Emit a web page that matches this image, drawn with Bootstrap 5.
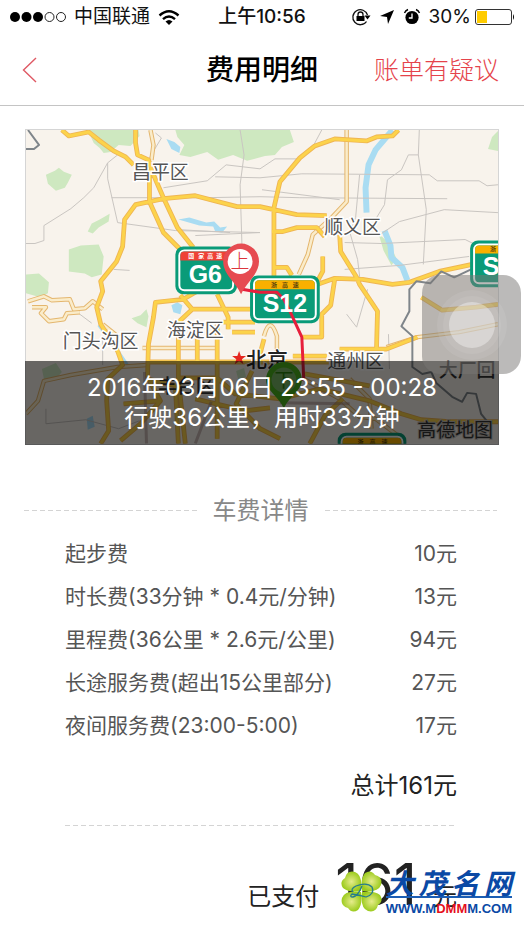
<!DOCTYPE html>
<html lang="zh-CN">
<head>
<meta charset="utf-8">
<meta name="viewport" content="width=device-width, initial-scale=1">
<title>费用明细</title>
<link rel="stylesheet" href="https://cdn.jsdelivr.net/npm/bootstrap@5.3.0/dist/css/bootstrap.min.css">
<style>
body{font-family:Inter,"Noto Sans CJK SC",sans-serif;background:#fff;color:#222}
.status{height:34px;font-size:19px;line-height:34px;color:#111;padding:0 9px}
.clock{font-weight:500}
.status svg,.topbar svg,.site-mark svg{display:block}
.topbar{height:72px;border-bottom:1px solid #c4c4c4;padding:0 25px}
.side{flex:1 1 0}
.topbar h1{font-size:28px;line-height:40px;font-weight:500;color:#000}
.dispute{font-size:25px;line-height:40px;font-weight:300;color:#e5434b;text-decoration:none}
.trip{padding:23px 25px 0}
.map-box{border:1px solid #d5d5d5;overflow:hidden}
.map-box svg{display:block;width:100%;height:auto}
.trip-info{left:0;right:0;bottom:0;height:84px;background:rgba(0,0,0,.58);color:#fff;font-size:24px;line-height:30px;padding-top:12px}
.assist{width:99px;height:99px;right:-22px;top:146px;border:0;border-radius:18px;background:rgba(120,118,115,.5)}
.assist span{border-radius:50%;background:rgba(255,255,255,.08)}
.ring-a{width:70px;height:70px}.ring-b{width:58px;height:58px}.ring-c{width:46px;height:46px}
.assist .ring-c{background:rgba(255,255,255,.36)}
.fare-head{padding:47px 27px 0 24px;gap:16px}
.fare-head h2{font-size:24px;line-height:38px;font-weight:400;color:#888}
.dash{height:1px;background:repeating-linear-gradient(90deg,#d4d4d4 0 5px,transparent 5px 8px)}
.fare{padding:2px 67px 0 65px}
.fare table{font-size:21px;line-height:43px;color:#555}
.fare td,.fare th{padding:0;font-weight:400}
.total{font-size:24px;line-height:40px;padding-top:19px;margin-bottom:19px}
.paid{font-size:24px;line-height:60px;padding-top:29px;gap:16px}
.paid strong{font-size:57px;font-weight:400}
.site-mark{right:12px;bottom:11px;gap:4px;color:#0a49a5;text-decoration:none}
.site-name{font-family:"Noto Sans CJK SC",sans-serif;font-size:28px;line-height:28px;font-weight:700;font-style:italic;border-bottom:2px solid #1c5eb4}
.site-url{font-family:"Liberation Sans",Arial,sans-serif;font-size:13px;line-height:14px;font-weight:700}
.site-url b{color:#e5101c}
</style>
<script src="https://cdn.jsdelivr.net/npm/bootstrap@5.3.0/dist/js/bootstrap.bundle.min.js"></script>
</head>
<body>
<div class="position-relative">
<div class="status d-flex align-items-center">
  <div class="side d-flex align-items-center gap-2">
    <svg width="57" height="12" viewBox="0 0 57 12"><g fill="#000"><circle cx="6" cy="6" r="5"/><circle cx="17.500" cy="6" r="5"/><circle cx="29" cy="6" r="5"/></g><g fill="none" stroke="#222"><circle cx="40.500" cy="6" r="4.500"/><circle cx="52" cy="6" r="4.500"/></g></svg>
    <span>中国联通</span>
    <svg width="22" height="17" viewBox="0 0 22 17" fill="none" stroke="#000" stroke-width="2.400"><path d="M1.500 6.500Q11-2 20.500 6.500M5 10.200Q11 4.800 17 10.200"/><path d="M7.500 12.500Q11 9.500 14.500 12.500L11 16Z" fill="#000" stroke="none"/></svg>
  </div>
  <span class="clock">上午10:56</span>
  <div class="side d-flex align-items-center justify-content-end">
    <svg width="20" height="18" viewBox="0 0 20 18" class="me-2"><path d="M15.500 13.500A7.500 7.500 0 1 1 16.500 7" fill="none" stroke="#111" stroke-width="1.300"/><path d="M13.500 7.500h6l-3 4z"/><path d="M5.500 8h8v5h-8z"/><path d="M7 8V6.500a2.500 2.500 0 0 1 5 0V8" fill="none" stroke="#111" stroke-width="1.300"/></svg>
    <svg width="16" height="16" viewBox="0 0 16 16" class="me-2"><path d="M15 1 9 15 8 8 1 7Z"/></svg>
    <svg width="18" height="18" viewBox="0 0 18 18" class="me-2"><circle cx="9" cy="9.500" r="6.600"/><path d="M1.500 5Q2.500 2.500 5 1.500M16.500 5Q15.500 2.500 13 1.500" fill="none" stroke="#000" stroke-width="1.400"/><path d="M9 5.500v4.500H5.800" fill="none" stroke="#fff" stroke-width="1.300"/></svg>
    <span class="me-1">30%</span>
    <svg width="40" height="16" viewBox="0 0 40 16"><rect x=".5" y=".5" width="36" height="15" rx="2.500" fill="#fff" stroke="#333"/><path d="M2 2h10v12H2z" fill="#fc0"/><path d="M38 5q2 3 0 6z"/></svg>
  </div>
</div>

<header class="topbar d-flex align-items-center">
  <div class="side"><button class="btn p-0 border-0" aria-label="返回"><svg width="18" height="26" viewBox="5 0 18 26" overflow="visible"><path d="M16 1 3.500 13 16 25" fill="none" stroke="#df5964" stroke-width="1.400"/></svg></button></div>
  <h1 class="m-0">费用明细</h1>
  <div class="side text-end"><a class="dispute text-nowrap" href="#">账单有疑议</a></div>
</header>

<section class="trip">
<div class="position-relative">
<div class="map-box">
<svg viewBox="25 130 474 315" role="img" aria-label="行程地图">
<defs><clipPath id="frame"><path d="M25 130h474v315H25z"/></clipPath>
<path id="lanes" d="M150 130 153 145 151 160M347 130V202L332 218 313 235 308 255 299 275M27 302 43 297 51 301 69 300 73 310 84 309 92 302 102 310M31 308 45 308 40 314 48 322 63 320 66 314 79 313M102 325 118 338M142 349H218M387 348 418 338 460 333 499 325M25 415 37 402 43 382 70 376 117 368 147 366M304 380 340 400 360 418 376 420 400 438M350 380 370 400 372 430M264 337Q270 315 277 337V355"/>
<path id="roads" d="M61 130 68 136 88 132 98 140 113 151 125 157 133 165M135 130 135 143 137 155 148 160 153 175 163 198 177 228 193 248M149 170 149 202 163 233 182 252M100 445 108 432 106 402 107 380 122 366 117 352 100 325 96 308 102 292 100 282 116 262 122 247 124 220 135 205 163 199 195 196 237 207 260 207 297 215 327 216M399 130 393 136 377 137 367 141 335 139 315 146 300 158 280 182 274 208V280M272 232H283L297 228H317L325 237M340 235 341 252 357 278 360 285 378 312 377 350M274 268H287L292 276M323 257V272L317 283M318 285 335 279 363 280 393 285 410 283 440 272 473 265M335 280 331 306 322 315V338H302M422 298 443 311 477 308 499 305M293 357H327M340 350H387L418 338M200 290 183 300 155 303 153 318 148 345 147 378 160 402 140 425 120 442M180 296 192 310 178 323V380L185 445M192 310H251M217 295 228 318V330M223 323H255M232 333H255M217 324V440M197 338V363M147 363H340M178 379H217L235 395 280 400 320 390 370 402 402 415 422 421 450 423 499 423M147 380 175 387 178 445M305 375 370 387M252 372 236 405 260 430 280 440M310 445 325 417 343 400M123 405 160 402M264 340 260 355M195 400 245 412 270 409"/></defs>
<g clip-path="url(#frame)">
<path fill="#f8f3ec" d="M25 130h474v315H25z"/>
<path fill="#cee8c0" d="M87 130 93 143 99 148 103 153 110 152 118 145 130 146 139 136 138 130ZM45 175 54 171 58 168 63 172 71 175 67 183 64 188 55 191 47 184ZM87 232 91 224 99 220 109 214 108 222 98 228 92 234ZM68 250 80 246 98 245 103 257 101 275 91 278 84 274 68 272ZM25 275 38 274 48 283 47 294 39 298 25 294ZM175 130 177 137 184 145 179 155 190 157 207 152 218 160 233 155 247 161 265 156 275 155 282 147 294 142 290 130ZM489 149 493 137 499 131V151ZM131 319 140 316 146 310 148 317 146 328 137 324ZM41 370 55 364 61 373 55 380 43 380ZM236 372 244 369 246 378 238 380ZM379 234 390 244 397 259 392 266 384 251Z"/>
<g fill="none" stroke="#a9dcf2" stroke-linejoin="round">
<path stroke-width="6" d="M393 130 376 150 369 165 366 188 367 213M385 231 391 246 392 258 403 268 408 281"/>
<path stroke-width="3" d="M98 326 116 350 127 366"/>
</g>
<path fill="#a9dcf2" d="M166 139 174 142 180 147 179 153 171 149ZM178 220 189 218 206 223 214 222 220 228 227 227 222 233 215 232 213 227 199 226ZM171 306 177 303 182 306 180 315 173 313ZM86 420 92 417 94 428 87 431Z"/>
<path fill="none" stroke="#c9c5c1" d="M25 244 34 244 43 241 43 226 70 209 83 198 93 188 107 163 117 155M107 163 107 179 117 223 175 231 260 233M111 198 204 198 260 197 300 198 448 199M163 188 207 181 226 165 260 169 275 159 300 159M215 177 260 178 302 174 430 175 438 181 480 181 488 186 499 185M240 130 244 155 240 185 242 250M420 130 419 155 427 210 424 265M419 155 409 155 402 170 388 180 385 205 374 223M195 236 260 233M177 230 230 233M382 234 400 222 445 210 499 213M345 243 382 244 466 240 476 245M345 270 400 266 470 257M262 190 340 200M360 175 356 218 350 232 358 260 361 285M347 315 357 328 368 290M113 270 129 271M75 312 91 324M155 133 161 138 149 158M322 130 314 145M102 338V366M45 410 45 425 85 421 118 430 139 422M389 335 390 370"/>
<g fill="none" stroke-linejoin="round">
<use href="#lanes" stroke="#e4b66e" stroke-width="4.500"/>
<use href="#lanes" stroke="#faecca" stroke-width="2.500"/>
<use href="#roads" stroke="#efb553" stroke-width="4.800"/>
<use href="#roads" stroke="#fcd34b" stroke-width="3"/>
<path stroke="#9d8080" stroke-width="3" opacity=".5" d="M144 373 146 445M195 445 211 403M280 404 350 405"/>
<path stroke="#7f858a" stroke-width="2" d="M27 130 38 145 33 149H25M472 270 455 278 442 272 431 284 417 282 410 290 410 312 402 327 413 337 413 368 423 375 432 373 437 384 453 398 463 403 468 394 477 395 482 415 490 425"/>
</g>
<g font-family="Inter,'Noto Sans CJK SC',sans-serif" text-anchor="middle">
<g font-size="19" fill="#555" stroke="#fff" stroke-width="3" paint-order="stroke">
<text x="160" y="179">昌平区</text><text x="353" y="234">顺义区</text><text x="195" y="338">海淀区</text><text x="100" y="349">门头沟区</text><text x="356" y="369">通州区</text></g>
<g font-size="19" font-weight="500" fill="#333"><text x="186" y="394">丰台区</text><text x="468" y="378">大厂回</text></g>
<text x="267" y="368" font-size="21" font-weight="500" fill="#222" stroke="#fff" stroke-width="2" paint-order="stroke">北京</text>
<path fill="#e5261f" d="m239 352 1.800 5h5.200l-4.200 3.200 1.600 5-4.400-3-4.400 3 1.600-5-4.200-3.200h5.200z"/>
<g stroke="#fff" stroke-width="2"><rect x="176" y="248" width="60" height="46" rx="7" fill="#0a9b78" stroke="#0a9b78"/><rect x="179" y="251" width="54" height="40" rx="5" fill="#0a9b78"/><rect x="251" y="277" width="68" height="46" rx="7" fill="#0a9b78" stroke="#0a9b78"/><rect x="254" y="280" width="62" height="40" rx="5" fill="#0a9b78"/><rect x="472" y="242" width="60" height="45" rx="7" fill="#0a9b78" stroke="#0a9b78"/><rect x="475" y="245" width="62" height="39" rx="5" fill="#0a9b78"/><rect x="339" y="435" width="67" height="46" rx="7" fill="#0a9b78" stroke="#0a9b78"/><rect x="342" y="438" width="61" height="40" rx="5" fill="#0a9b78"/></g>
<path fill="#ef4136" d="M180 261v-5q0-4 4-4h44q4 0 4 4v5z"/><path fill="#f9b000" d="M255 290v-5q0-4 4-4h52q4 0 4 4v5zM476 254v-4q0-4 4-4h30v8zM343 448v-5q0-4 4-4h51q4 0 4 4v5z"/>
<g font-size="6" font-weight="700"><g fill="#fff"><text x="191" y="259">国</text><text x="201" y="259">家</text><text x="210" y="259">高</text><text x="219" y="259">速</text></g><g fill="#59440b"><text x="274" y="288">浙</text><text x="285" y="288">高</text><text x="296" y="288">速</text><text x="494" y="252">浙</text><text x="361" y="445">浙</text><text x="373" y="445">高</text><text x="385" y="445">速</text></g></g>
<path fill="none" stroke="#e71f3c" stroke-width="3" stroke-linejoin="round" d="M242 290 260 293 277 293 284 300 290 312 302 338 304 382"/>
<g fill="#fff" font-size="25" font-weight="700" font-family="'Liberation Sans',Arial,sans-serif"><text x="205" y="284">G6</text><text x="285" y="313">S12</text><text x="492" y="276">S</text></g>
<path fill="#e64b51" d="M241 295C236 283 223 275 223 262a18 18 0 0 1 36 0C259 275 246 283 241 295Z"/><circle cx="240" cy="262" r="12.500" fill="#fff"/><text x="240" y="269" font-size="19" font-weight="300" fill="#dc353d">上</text>
<path fill="#4ab51d" d="M284 410C279 397 266 392 266 381a18 18 0 0 1 36 0C302 392 289 397 284 410Z"/><circle cx="284" cy="381" r="12.500" fill="#79b967"/><text x="284" y="388" font-size="19" fill="#29830e">下</text>
<text x="456" y="438" font-size="19" fill="#333" stroke="#c8c4be" stroke-width="2" paint-order="stroke">高德地图</text>
</g>
</g>
</svg>
</div>
<div class="trip-info position-absolute text-center"><div>2016年03月06日 23:55 - 00:28</div><div>行驶36公里，用时33分钟</div></div>
<button class="assist position-absolute d-flex align-items-center justify-content-center p-0" aria-label="辅助触控"><span class="ring-a d-flex align-items-center justify-content-center"><span class="ring-b d-flex align-items-center justify-content-center"><span class="ring-c"></span></span></span></button>
</div>
</section>

<section>
  <div class="fare-head d-flex align-items-center"><div class="dash flex-fill"></div><h2 class="m-0">车费详情</h2><div class="dash flex-fill"></div></div>
  <div class="fare">
    <table class="w-100"><tbody>
      <tr><th scope="row">起步费</th><td class="text-end">10元</td></tr>
      <tr><th scope="row">时长费(33分钟 * 0.4元/分钟)</th><td class="text-end">13元</td></tr>
      <tr><th scope="row">里程费(36公里 * 2.6元/公里)</th><td class="text-end">94元</td></tr>
      <tr><th scope="row">长途服务费(超出15公里部分)</th><td class="text-end">27元</td></tr>
      <tr><th scope="row">夜间服务费(23:00-5:00)</th><td class="text-end">17元</td></tr>
    </tbody></table>
    <div class="total text-end">总计161元</div>
    <div class="dash"></div>
    <div class="paid d-flex justify-content-end align-items-baseline"><span>已支付</span><strong>161</strong><span>元</span></div>
  </div>
</section>

<a class="site-mark position-absolute d-flex align-items-center" href="#">
  <svg width="41" height="41" viewBox="0 0 41 41"><defs><radialGradient id="leaf"><stop stop-color="#e6ec8c"/><stop offset="1" stop-color="#9ccb1d"/></radialGradient></defs><g fill="url(#leaf)"><path id="petal" d="M20 20Q8 22 2 17Q-2 11 4 7Q6-1 14 1Q22 4 20 20Z"/><use href="#petal" transform="rotate(90 20.500 20.500)"/><use href="#petal" transform="rotate(180 20.500 20.500)"/><use href="#petal" transform="rotate(270 20.500 20.500)"/></g><path d="M21 15Q17 25 12 26Q8 26 11 23Q18 24 25 26Q34 23 31 16Q26 11 15 15Q9 18 12 21" fill="none" stroke="#277d8b" stroke-width="1.300"/></svg>
  <div><div class="site-name d-flex justify-content-between"><span>大</span><span>茂</span><span>名</span><span>网</span></div><div class="site-url pt-1">WWW.M<b>DMM</b>M.COM</div></div>
</a>
</div>
</body>
</html>
